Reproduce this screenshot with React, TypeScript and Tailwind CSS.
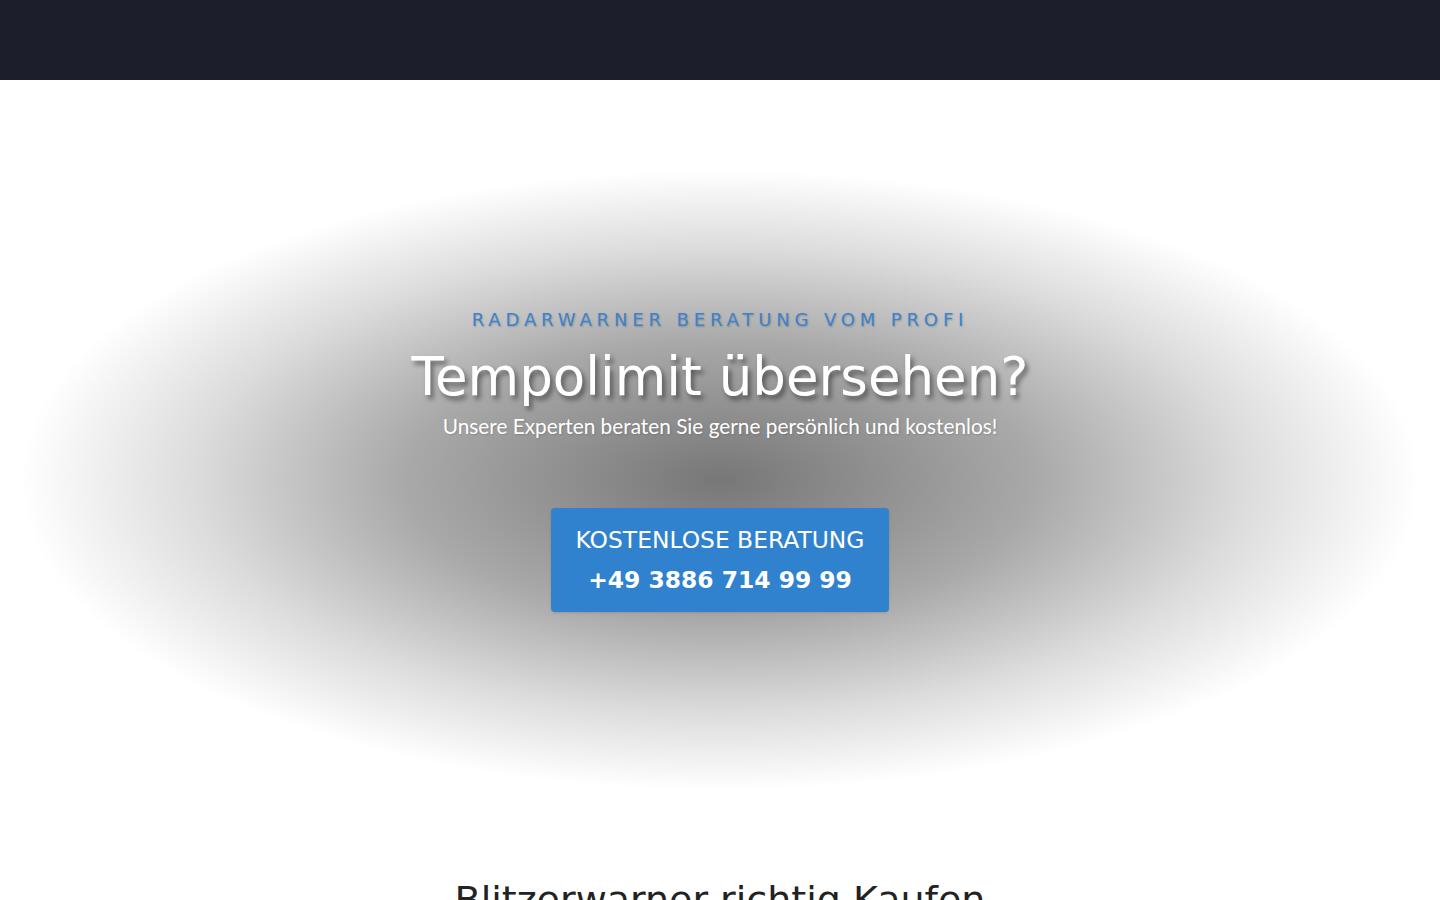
import React from 'react';

const App: React.FC = () => {
  return (
    <div className="min-h-screen bg-white font-['DejaVu_Sans',sans-serif]">
      {/* Top bar */}
      <header className="h-20 w-full bg-[#1c1f2b]" />

      {/* Hero */}
      <section className="h-[760px] w-full bg-[radial-gradient(ellipse_700px_310px_at_50%_400px,#777777_0%,#a9a9a9_45%,#dcdcdc_75%,#ffffff_100%)]">
        <div className="flex flex-col items-center pt-[226px] text-center">
          <p className="text-[18px] leading-[27px] tracking-[0.27em] text-[#3d82cc] [text-shadow:1px_1px_2px_rgba(0,0,0,0.2)]">
            RADARWARNER BERATUNG VOM PROFI
          </p>
          <h1 className="mt-[11px] text-[53px] leading-[66px] text-white [text-shadow:3px_4px_5px_rgba(0,0,0,0.45)]">
            Tempolimit übersehen?
          </h1>
          <p className="mt-[2px] font-['Lato',sans-serif] text-[20.8px] leading-[28px] text-white [text-shadow:1px_1px_2px_rgba(0,0,0,0.15)]">
            Unsere Experten beraten Sie gerne persönlich und kostenlos!
          </p>
          <a
            href="#"
            className="mt-[68px] flex flex-col items-center rounded-[4px] bg-[#3182ce] px-[25px] py-3 text-[23.4px] leading-[40px] text-white shadow-sm"
          >
            <span>KOSTENLOSE BERATUNG</span>
            <span className="font-bold">+49 3886 714 99 99</span>
          </a>
        </div>
      </section>

      {/* Next section */}
      <section className="flex justify-center pt-[38px] pb-16">
        <h2 className="text-[38px] leading-[44px] text-[#222222]">Blitzerwarner richtig Kaufen</h2>
      </section>
    </div>
  );
};

export default App;
